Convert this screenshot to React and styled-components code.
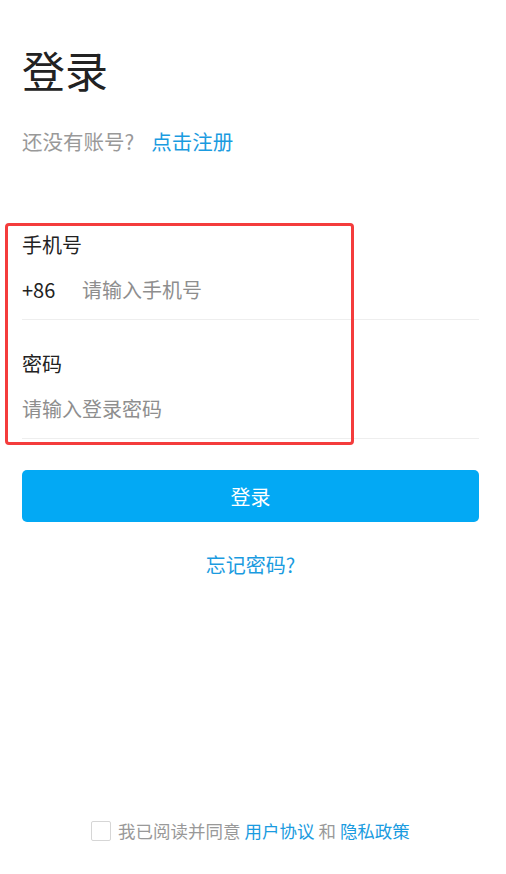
import React from "react";
import styled, { createGlobalStyle } from "styled-components";

const GlobalStyle = createGlobalStyle`
  body {
    margin: 0;
    background: #fff;
    font-family: "Noto Sans CJK SC", "Noto Sans", sans-serif;
  }
  * { box-sizing: border-box; }
`;

const Page = styled.main`
  position: relative;
  display: flex;
  flex-direction: column;
  min-height: 874px;
  padding: 0 27px 29px 22px;
`;

const Title = styled.h1`
  margin: 45px 0 0;
  font-size: 43px;
  line-height: 48px;
  font-weight: 400;
  color: #222;
`;

const Subtitle = styled.div`
  margin-top: 34px;
  font-size: 20.5px;
  line-height: 28px;
  color: #999;
`;

const Link = styled.a`
  color: #1a9be0;
  text-decoration: none;
  margin-left: ${(p) => p.$gap || 0}px;
`;

const Form = styled.form`
  margin-top: 46px;
  display: flex;
  flex-direction: column;
`;

const Field = styled.div`
  padding-top: 30px;
  border-bottom: 1px solid #eee;
`;

const Label = styled.div`
  font-size: 20px;
  line-height: 28px;
  color: #222;
`;

const InputRow = styled.div`
  display: flex;
  align-items: center;
  height: 60px;
`;

const Prefix = styled.span`
  min-width: 60px;
  font-size: 20px;
  color: #222;
`;

const Input = styled.input`
  flex: 1;
  border: none;
  outline: none;
  padding: 0;
  font-family: inherit;
  font-size: 20px;
  color: #222;
  background: transparent;
  &::placeholder {
    color: #8e8e8e;
  }
`;

const Highlight = styled.div`
  position: absolute;
  left: 5px;
  top: 223px;
  width: 349px;
  height: 222px;
  border: 3px solid #f43c3c;
  border-radius: 4px;
  pointer-events: none;
`;

const SubmitButton = styled.button`
  margin-top: 31px;
  height: 52px;
  border: none;
  border-radius: 5px;
  background: #03a9f4;
  color: #fff;
  font-family: inherit;
  font-size: 20px;
`;

const Forgot = styled.div`
  margin-top: 29px;
  text-align: center;
  font-size: 20px;
  line-height: 28px;
`;

const Agreement = styled.label`
  margin-top: auto;
  display: flex;
  align-items: center;
  justify-content: center;
  gap: 7px;
  font-size: 17.5px;
  line-height: 28px;
  color: #999;
`;

const Checkbox = styled.span`
  width: 20px;
  height: 20px;
  border: 1px solid #d6d6d6;
  border-radius: 2px;
`;

export default function App() {
  return (
    <Page>
      <GlobalStyle />
      <Title>登录</Title>
      <Subtitle>
        还没有账号?<Link href="#" $gap={17}>点击注册</Link>
      </Subtitle>
      <Form onSubmit={(e) => e.preventDefault()}>
        <Field>
          <Label>手机号</Label>
          <InputRow>
            <Prefix>+86</Prefix>
            <Input placeholder="请输入手机号" />
          </InputRow>
        </Field>
        <Field>
          <Label>密码</Label>
          <InputRow>
            <Input type="password" placeholder="请输入登录密码" />
          </InputRow>
        </Field>
        <SubmitButton type="submit">登录</SubmitButton>
      </Form>
      <Forgot>
        <Link href="#">忘记密码?</Link>
      </Forgot>
      <Agreement>
        <Checkbox />
        <span>
          我已阅读并同意 <Link href="#">用户协议</Link> 和 <Link href="#">隐私政策</Link>
        </span>
      </Agreement>
      <Highlight />
    </Page>
  );
}
